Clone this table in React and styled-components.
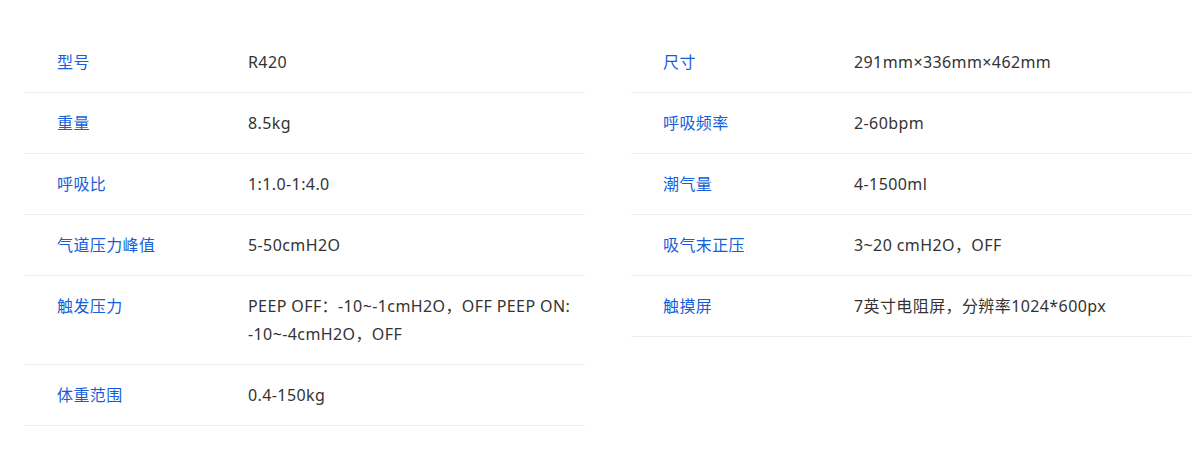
import React from "react";
import styled, { createGlobalStyle } from "styled-components";

const GlobalStyle = createGlobalStyle`
  body {
    margin: 0;
    background: #fff;
    font-family: "Noto Sans", "Noto Sans CJK SC", sans-serif;
  }
`;

const Page = styled.div`
  display: grid;
  grid-template-columns: 560px 560px;
  column-gap: 46px;
  align-items: start;
  padding: 32px 13px 0 25px;
`;

const Table = styled.div`
  display: flex;
  flex-direction: column;
`;

const Row = styled.div`
  display: flex;
  padding: 16px 0;
  border-bottom: 1px solid #eeeeee;
  font-size: 16px;
  line-height: 28px;
  letter-spacing: 0.4px;
`;

const Label = styled.div`
  flex: 0 0 223px;
  padding-left: 32px;
  box-sizing: border-box;
  color: #165ed9;
`;

const Value = styled.div`
  flex: 1;
  padding-right: 10px;
  color: #333333;
`;

const left = [
  ["型号", "R420"],
  ["重量", "8.5kg"],
  ["呼吸比", "1:1.0-1:4.0"],
  ["气道压力峰值", "5-50cmH2O"],
  ["触发压力", "PEEP OFF：-10~-1cmH2O，OFF PEEP ON: -10~-4cmH2O，OFF"],
  ["体重范围", "0.4-150kg"],
];

const right = [
  ["尺寸", "291mm×336mm×462mm"],
  ["呼吸频率", "2-60bpm"],
  ["潮气量", "4-1500ml"],
  ["吸气末正压", "3~20 cmH2O，OFF"],
  ["触摸屏", "7英寸电阻屏，分辨率1024*600px"],
];

const SpecTable = ({ rows }) => (
  <Table>
    {rows.map(([label, value]) => (
      <Row key={label}>
        <Label>{label}</Label>
        <Value>{value}</Value>
      </Row>
    ))}
  </Table>
);

const App = () => (
  <>
    <GlobalStyle />
    <Page>
      <SpecTable rows={left} />
      <SpecTable rows={right} />
    </Page>
  </>
);

export default App;
